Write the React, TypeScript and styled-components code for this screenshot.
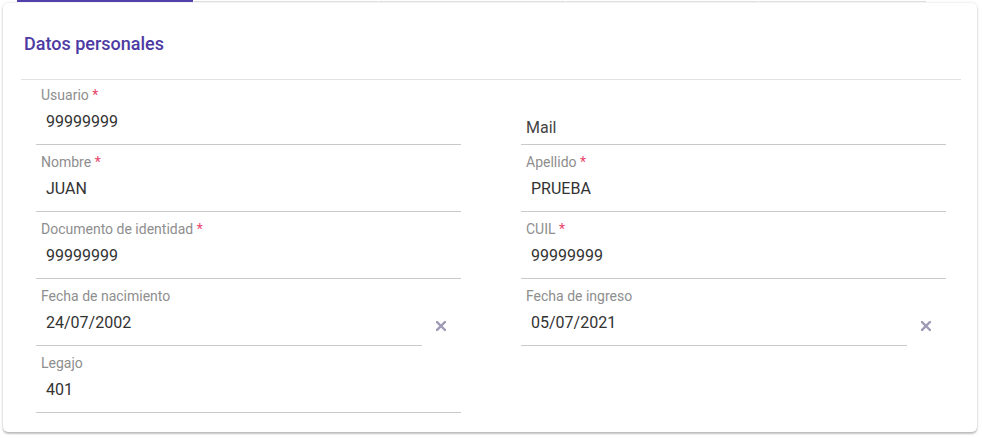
import styled, { createGlobalStyle } from "styled-components";

const GlobalStyle = createGlobalStyle`
    html, body {
        margin: 0;
        padding: 0;
        background: #ffffff;
        font-family: Roboto, "Liberation Sans", Arial, sans-serif;
    }
`;

const Page = styled.div`
    width: 982px;
    height: 438px;
    padding: 0 5px 0 3px;
    box-sizing: border-box;
    overflow: hidden;
`;

const TabBar = styled.div`
    display: flex;
    gap: 1px;
    height: 3px;
    margin-left: 14px;
    width: 909px;
`;

const Tab = styled.div<{ $width: number; $active?: boolean }>`
    width: ${(p) => p.$width}px;
    height: ${(p) => (p.$active ? 2 : 1)}px;
    margin-top: ${(p) => (p.$active ? 0 : 1)}px;
    background: ${(p) => (p.$active ? "#5142ab" : "#dedede")};
`;

const Card = styled.section`
    background: #fff;
    border-radius: 5px;
    height: 429px;
    box-sizing: border-box;
    box-shadow: 0 2px 2px rgba(0, 0, 0, 0.22), 0 0 3px rgba(0, 0, 0, 0.14);
    display: flex;
    flex-direction: column;
`;

const Header = styled.header`
    padding: 31px 21px 25px;
`;

const Title = styled.h2`
    margin: 0;
    font-size: 18px;
    line-height: 20px;
    font-weight: 500;
    color: #4d3aa3;
`;

const Divider = styled.hr`
    margin: 0 16px 0 18px;
    border: 0;
    border-top: 1px solid #e2e2e2;
`;

const FieldGrid = styled.div`
    display: grid;
    grid-template-columns: 425px 425px;
    grid-auto-rows: 67px;
    column-gap: 60px;
    padding: 0 31px 0 33px;
    margin-top: -2px;
`;

const FieldRow = styled.div`
    display: flex;
    align-items: stretch;
`;

const Field = styled.div`
    flex: 1;
    border-bottom: 1px solid #c9c9c9;
    padding-top: 10px;
    box-sizing: border-box;
    display: flex;
    flex-direction: column;
`;

const Label = styled.label`
    font-size: 14px;
    line-height: 14px;
    color: #8e8e8e;
    padding-left: 5px;
`;

const Required = styled.span`
    color: #e8466b;
`;

const Value = styled.div`
    font-size: 16px;
    line-height: 20px;
    color: #333;
    padding-left: 10px;
    margin-top: 10px;
`;

const Placeholder = styled.div`
    font-size: 16px;
    line-height: 20px;
    color: #444;
    padding-left: 5px;
    margin-top: 30px;
`;

const ClearButton = styled.button`
    width: 39px;
    padding: 0 0 20px;
    border: 0;
    background: none;
    display: flex;
    align-items: flex-end;
    justify-content: center;
    cursor: pointer;
`;

function ClearIcon() {
    return (
        <svg width="10" height="10" viewBox="0 0 10 10" style={{ marginBottom: -5, marginRight: 2 }}>
            <path d="M1 1 L9 9 M9 1 L1 9" stroke="#9f9bb6" strokeWidth="2.4" strokeLinecap="square" />
        </svg>
    );
}

type Campo = {
    label?: string;
    value?: string;
    required?: boolean;
    date?: boolean;
    placeholder?: string;
};

const campos: Campo[] = [
    { label: "Usuario", value: "99999999", required: true },
    { placeholder: "Mail" },
    { label: "Nombre", value: "JUAN", required: true },
    { label: "Apellido", value: "PRUEBA", required: true },
    { label: "Documento de identidad", value: "99999999", required: true },
    { label: "CUIL", value: "99999999", required: true },
    { label: "Fecha de nacimiento", value: "24/07/2002", date: true },
    { label: "Fecha de ingreso", value: "05/07/2021", date: true },
    { label: "Legajo", value: "401" },
];

function CampoItem({ campo }: { campo: Campo }) {
    return (
        <FieldRow>
            <Field>
                {campo.placeholder ? (
                    <Placeholder>{campo.placeholder}</Placeholder>
                ) : (
                    <>
                        <Label>
                            {campo.label}
                            {campo.required && <Required> *</Required>}
                        </Label>
                        <Value>{campo.value}</Value>
                    </>
                )}
            </Field>
            {campo.date && (
                <ClearButton title="Limpiar">
                    <ClearIcon />
                </ClearButton>
            )}
        </FieldRow>
    );
}

export default function App() {
    return (
        <>
            <GlobalStyle />
            <Page>
                <TabBar>
                    <Tab $width={176} $active />
                    <Tab $width={184} />
                    <Tab $width={186} />
                    <Tab $width={192} />
                    <Tab $width={167} />
                </TabBar>
                <Card>
                    <Header>
                        <Title>Datos personales</Title>
                    </Header>
                    <Divider />
                    <FieldGrid>
                        {campos.map((c, i) => (
                            <CampoItem key={i} campo={c} />
                        ))}
                    </FieldGrid>
                </Card>
            </Page>
        </>
    );
}
